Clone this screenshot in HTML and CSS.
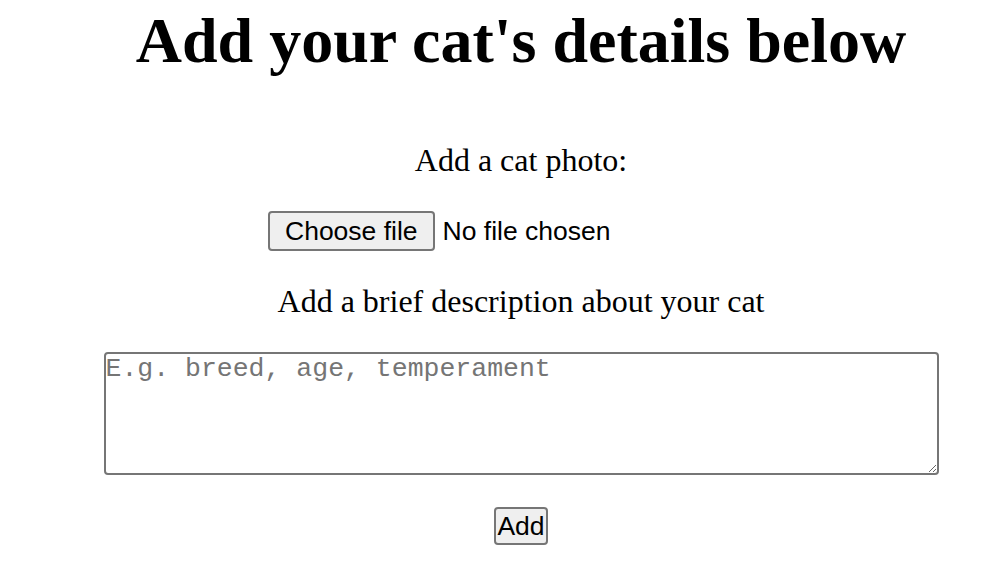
FILE: index.html
```html
<!DOCTYPE html>
<html lang="en">
<head>
    <title>add your cat</title>
    <link rel="stylesheet" href="styles.css">
</head>
<body>
  <div class="page">
    <h1 class="title">Add your cat's details below</h1>
    <form class="cat_form">
        <label class="field_lbl" for="photo">Add a cat photo:</label>
        <div class="file_row">
            <label class="file_btn" for="photo">Choose file</label>
            <span class="file_name">No file chosen</span>
            <input type="file" id="photo" name="photo" class="file_in">
        </div>
        <label class="field_lbl" for="desc">Add a brief description about your cat</label>
        <textarea id="desc" name="desc" class="desc_in" placeholder="E.g. breed, age, temperament"></textarea>
        <button type="submit" class="add_btn">Add</button>
    </form>
  </div>
</body>
</html>
```

FILE: styles.css
```css
*{
    margin: 0;
    box-sizing: border-box;
}
body{
    background-color: white;
    font-family: "Liberation Serif", "Times New Roman", serif;
}
.page{
    padding-left: 60px;
    padding-top: 4px;
    text-align: center;
}
.title{
    font-size: 64px;
    font-weight: 700;
    margin-bottom: 64px;
}
.cat_form{
    display: flex;
    flex-direction: column;
    align-items: center;
    gap: 32px;
}
.field_lbl{
    font-size: 32px;
}
.file_row{
    width: 506px;
    height: 40px;
    display: flex;
    align-items: center;
    gap: 8px;
    font-family: "Liberation Sans", Arial, sans-serif;
    font-size: 26.5px;
}
.file_in{
    display: none;
}
.file_btn{
    height: 40px;
    padding: 0 15px;
    display: flex;
    align-items: center;
    background-color: #efefef;
    border: 2px solid #767676;
    border-radius: 4px;
    color: black;
}
.desc_in{
    width: 835px;
    height: 123px;
    padding: 0;
    font-family: "Liberation Mono", "Courier New", monospace;
    font-size: 26.5px;
    border: 2px solid #767676;
    border-radius: 4px;
}
.desc_in::placeholder{
    color: #757575;
}
.add_btn{
    height: 38px;
    padding: 0 1px;
    font-family: "Liberation Sans", Arial, sans-serif;
    font-size: 26.5px;
    background-color: #efefef;
    border: 2px solid #767676;
    border-radius: 4px;
    color: black;
}
```
